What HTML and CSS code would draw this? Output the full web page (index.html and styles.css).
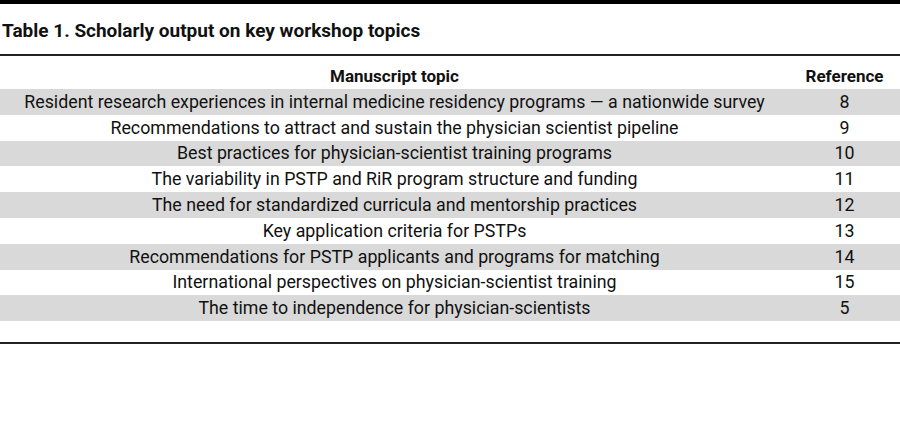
FILE: index.html
```html
<!DOCTYPE html>
<html>
<head>
<meta charset="utf-8">
<link rel="stylesheet" href="styles.css">
</head>
<body>
<div class="page">
  <div class="topbar"></div>
  <h1 class="title">Table 1. Scholarly output on key workshop topics</h1>
  <div class="table-wrap">
    <table class="tbl">
      <thead>
        <tr><th class="topic">Manuscript topic</th><th class="ref">Reference</th></tr>
      </thead>
      <tbody>
        <tr class="shade"><td class="topic">Resident research experiences in internal medicine residency programs — a nationwide survey</td><td class="ref">8</td></tr>
        <tr><td class="topic">Recommendations to attract and sustain the physician scientist pipeline</td><td class="ref">9</td></tr>
        <tr class="shade"><td class="topic">Best practices for physician-scientist training programs</td><td class="ref">10</td></tr>
        <tr><td class="topic">The variability in PSTP and RiR program structure and funding</td><td class="ref">11</td></tr>
        <tr class="shade"><td class="topic">The need for standardized curricula and mentorship practices</td><td class="ref">12</td></tr>
        <tr><td class="topic">Key application criteria for PSTPs</td><td class="ref">13</td></tr>
        <tr class="shade"><td class="topic">Recommendations for PSTP applicants and programs for matching</td><td class="ref">14</td></tr>
        <tr><td class="topic">International perspectives on physician-scientist training</td><td class="ref">15</td></tr>
        <tr class="shade"><td class="topic">The time to independence for physician-scientists</td><td class="ref">5</td></tr>
      </tbody>
    </table>
  </div>
</div>
</body>
</html>
```
FILE: styles.css
```css
html, body {
  margin: 0;
  padding: 0;
  background: #fff;
}
.page {
  width: 900px;
  font-family: Roboto, "Liberation Sans", sans-serif;
  color: #111;
}
.topbar {
  height: 4px;
  background: #000;
}
.title {
  margin: 15px 0 11px 2px;
  font-size: 19px;
  line-height: 24px;
  font-weight: 700;
  letter-spacing: 0;
}
.table-wrap {
  border-top: 2px solid #222;
  border-bottom: 2px solid #222;
  padding-bottom: 21px;
}
.tbl {
  width: 100%;
  border-collapse: collapse;
  font-size: 17.8px;
}
.tbl th {
  height: 33px;
  padding: 0;
  font-size: 17px;
  font-weight: 700;
  vertical-align: middle;
  line-height: 20px;
  padding-top: 7px;
  box-sizing: border-box;
}
.tbl td {
  height: 25.8px;
  padding: 0;
  line-height: 20px;
  vertical-align: middle;
}
.topic {
  width: 789px;
  text-align: center;
}
.ref {
  text-align: center;
}
.shade td {
  background: #d9d9d9;
}
```
